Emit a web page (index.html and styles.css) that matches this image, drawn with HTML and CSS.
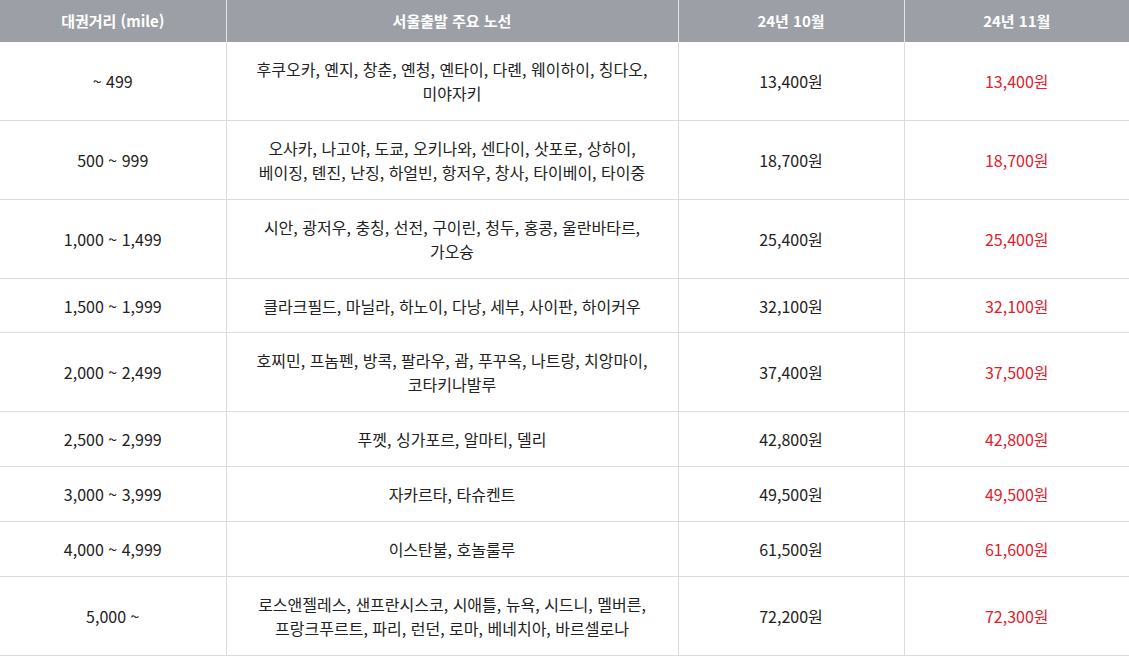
FILE: index.html
```html
<!DOCTYPE html>
<html lang="ko">
<head>
<meta charset="utf-8">
<link rel="stylesheet" href="styles.css">
</head>
<body>
<table class="fare">
  <colgroup>
    <col class="c1"><col class="c2"><col class="c3"><col class="c4">
  </colgroup>
  <thead>
    <tr><th>대권거리 (mile)</th><th>서울출발 주요 노선</th><th>24년 10월</th><th>24년 11월</th></tr>
  </thead>
  <tbody>
    <tr><td>~ 499</td><td>후쿠오카, 옌지, 창춘, 옌청, 옌타이, 다롄, 웨이하이, 칭다오,<br>미야자키</td><td>13,400원</td><td class="red">13,400원</td></tr>
    <tr><td>500 ~ 999</td><td>오사카, 나고야, 도쿄, 오키나와, 센다이, 삿포로, 상하이,<br>베이징, 톈진, 난징, 하얼빈, 항저우, 창사, 타이베이, 타이중</td><td>18,700원</td><td class="red">18,700원</td></tr>
    <tr><td>1,000 ~ 1,499</td><td>시안, 광저우, 충칭, 선전, 구이린, 청두, 홍콩, 울란바타르,<br>가오슝</td><td>25,400원</td><td class="red">25,400원</td></tr>
    <tr class="short"><td>1,500 ~ 1,999</td><td>클라크필드, 마닐라, 하노이, 다낭, 세부, 사이판, 하이커우</td><td>32,100원</td><td class="red">32,100원</td></tr>
    <tr><td>2,000 ~ 2,499</td><td>호찌민, 프놈펜, 방콕, 팔라우, 괌, 푸꾸옥, 나트랑, 치앙마이,<br>코타키나발루</td><td>37,400원</td><td class="red">37,500원</td></tr>
    <tr><td>2,500 ~ 2,999</td><td>푸껫, 싱가포르, 알마티, 델리</td><td>42,800원</td><td class="red">42,800원</td></tr>
    <tr><td>3,000 ~ 3,999</td><td>자카르타, 타슈켄트</td><td>49,500원</td><td class="red">49,500원</td></tr>
    <tr><td>4,000 ~ 4,999</td><td>이스탄불, 호놀룰루</td><td>61,500원</td><td class="red">61,600원</td></tr>
    <tr><td>5,000 ~</td><td>로스앤젤레스, 샌프란시스코, 시애틀, 뉴욕, 시드니, 멜버른,<br>프랑크푸르트, 파리, 런던, 로마, 베네치아, 바르셀로나</td><td>72,200원</td><td class="red">72,300원</td></tr>
  </tbody>
</table>
</body>
</html>
```
FILE: styles.css
```css
html, body {
  margin: 0;
  padding: 0;
  background: #fff;
}
body {
  font-family: "Noto Sans CJK KR", "Noto Sans", sans-serif;
  font-size: 16px;
  color: #222;
}
.fare {
  width: 1129px;
  border-collapse: collapse;
  table-layout: fixed;
}
.c1 { width: 226px; }
.c2 { width: 452px; }
.c3 { width: 226px; }
.c4 { width: 225px; }
.fare th {
  background: #9c9fa6;
  color: #fff;
  font-size: 15px;
  font-weight: 700;
  height: 42px;
  padding: 0;
  line-height: 24px;
  text-align: center;
  border-left: 1px solid #e4e5e8;
}
.fare td {
  padding: 15px 0;
  line-height: 24px;
  text-align: center;
  border-left: 1px solid #dcdcdc;
  border-bottom: 1px solid #dcdcdc;
}
.fare tr.short td {
  padding: 14.5px 0;
}
.fare th:first-child, .fare td:first-child {
  border-left: none;
}
.fare td.red {
  color: #e1202b;
}
```
